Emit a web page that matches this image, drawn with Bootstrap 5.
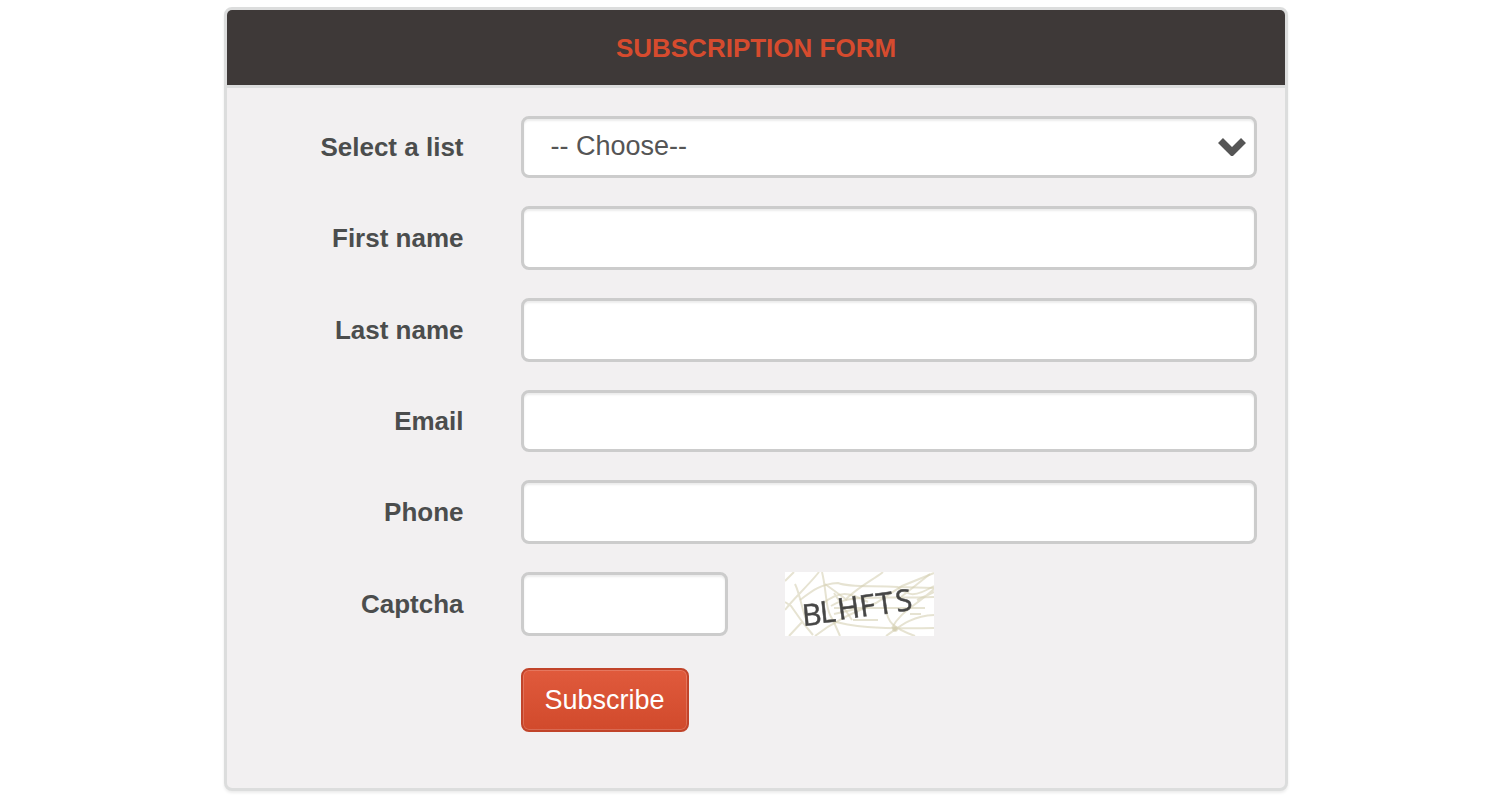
<!DOCTYPE html>
<html lang="en">
<head>
<meta charset="utf-8">
<meta name="viewport" content="width=device-width, initial-scale=1">
<title>Subscription form</title>
<link href="https://cdn.jsdelivr.net/npm/bootstrap@5.3.0/dist/css/bootstrap.min.css" rel="stylesheet">
<style>
  body { font-family: "Liberation Sans", Arial, sans-serif; font-size: 26px; line-height: 32px; color: #4b4d4d; background: #fff; }
  .page { padding: 7px 208px 7px 224px; }
  .panel { border: 3px solid #dcdddd; border-radius: 8px; background: #f2f0f1; color: inherit; box-shadow: 0 2px 3px rgba(0,0,0,.08); }
  .panel .card-header { background: #3e3938; color: #d64b2e; border-bottom: 3px solid #dcdddd; border-radius: 5px 5px 0 0; padding: 22px 28px 21px; }
  .panel .card-header h1 { font-size: 26px; line-height: 32px; }
  .panel .card-body { padding: 28px 28px 56px 29px; gap: 28px; }
  .panel .row { --bs-gutter-x: 57px; }
  .panel .form-control, .panel .form-select { height: 64px; border: 3px solid #ccc; border-radius: 8px; font-size: 27px; line-height: 32px; color: #555; background-color: #fff; box-shadow: inset 0 2px 2px rgba(0,0,0,.075); }
  .panel .form-select, .panel .form-control[type=email] { height: 62px; }
  .panel .form-select { padding: 10px 48px 12px 27px; background-image: url("data:image/svg+xml,%3Csvg xmlns='http://www.w3.org/2000/svg' viewBox='0 0 28 18'%3E%3Cpath d='M2.500 2.500 14 14 25.500 2.500' fill='none' stroke='%23555' stroke-width='7'/%3E%3C/svg%3E"); background-size: 28px 18px; background-position: right 8px center; }
  .btn-subscribe { height: 64px; padding: 0 22px; border: 2px solid #c1442a; border-radius: 8px; font-size: 27px; line-height: 32px; color: #fff; background: linear-gradient(#e05a3c, #d14a2c); box-shadow: inset 0 0 0 1px rgba(255,255,255,.18); }
  .btn-subscribe:hover { color: #fff; background: #d14a2c; border-color: #b23c24; }
  .captcha-art { font-family: "Open Sans", sans-serif; font-size: 30px; }
</style>
</head>
<body>
<main class="page">
  <form class="card panel">
    <div class="card-header text-center"><h1 class="fw-bold mb-0">SUBSCRIPTION FORM</h1></div>
    <div class="card-body d-flex flex-column">
      <div class="row align-items-center">
        <label for="list" class="col-3 text-end fw-bold">Select a list</label>
        <div class="col-9"><select id="list" class="form-select"><option>-- Choose--</option></select></div>
      </div>
      <div class="row align-items-center">
        <label for="first" class="col-3 text-end fw-bold">First name</label>
        <div class="col-9"><input id="first" type="text" class="form-control"></div>
      </div>
      <div class="row align-items-center">
        <label for="last" class="col-3 text-end fw-bold">Last name</label>
        <div class="col-9"><input id="last" type="text" class="form-control"></div>
      </div>
      <div class="row align-items-center">
        <label for="email" class="col-3 text-end fw-bold">Email</label>
        <div class="col-9"><input id="email" type="email" class="form-control"></div>
      </div>
      <div class="row align-items-center">
        <label for="phone" class="col-3 text-end fw-bold">Phone</label>
        <div class="col-9"><input id="phone" type="tel" class="form-control"></div>
      </div>
      <div class="row align-items-center">
        <label for="captcha" class="col-3 text-end fw-bold">Captcha</label>
        <div class="col-3"><input id="captcha" type="text" class="form-control"></div>
        <div class="col-6">
          <svg class="captcha-art d-block" width="149" height="64" viewBox="0 0 149 64" role="img" aria-label="Captcha">
            <rect width="149" height="64" fill="#fff"/>
            <!-- noise lines -->
            <g fill="none" stroke="#d6d1b4" stroke-opacity=".6" stroke-width="2" style="filter:blur(.5px)">
              <path d="M0 9 9 0M0 38C8 27 22 15 34 0M0 30 6 34 18 51 28 63M4 64 18 49M10 12C15 22 17 38 22 50"/>
              <path d="M15 28C28 18 36 12 53 11C66 16 90 13 113 15L149 16"/>
              <path d="M37 0C42 20 40 38 48 48L55 64M40 12 62 28M61 27C76 13 88 8 98 0"/>
              <path d="M30 64C48 50 65 42 91 31L117 14 149 1M46 34C65 22 92 27 149 25"/>
              <path d="M43 48C68 55 88 57 149 56M49 36H140M49 42 80 35M68 48H93M125 42H136"/>
              <path d="M101 36C102 50 108 56 130 64M101 64C113 56 125 44 149 43"/>
              <path d="M107 56C115 40 129 35 149 17M113 16C123 22 127 27 149 14M116 25 145 2M132 28 149 20"/>
              <path d="M49 21 67 48M37 32C55 18 64 20 83 30"/>
              <circle cx="110" cy="57" r="2" fill="#d6d1b4"/>
            </g>
            <g fill="#333" stroke="#333" stroke-width=".5" opacity=".9" style="filter:blur(.5px)">
              <text transform="translate(18 54) rotate(-5)">B</text>
              <text transform="translate(36 51) rotate(-6)">L</text>
              <text transform="translate(54 48) rotate(-8)">H</text>
              <text transform="translate(76 45) rotate(-8)">F</text>
              <text transform="translate(93 43) rotate(-8)">T</text>
              <text transform="translate(112 40) rotate(-8)">S</text>
            </g>
          </svg>
        </div>
      </div>
      <div class="row pt-1">
        <div class="col-9 offset-3"><button type="submit" class="btn btn-subscribe">Subscribe</button></div>
      </div>
    </div>
  </form>
</main>
<script src="https://cdn.jsdelivr.net/npm/bootstrap@5.3.0/dist/js/bootstrap.bundle.min.js"></script>
</body>
</html>
